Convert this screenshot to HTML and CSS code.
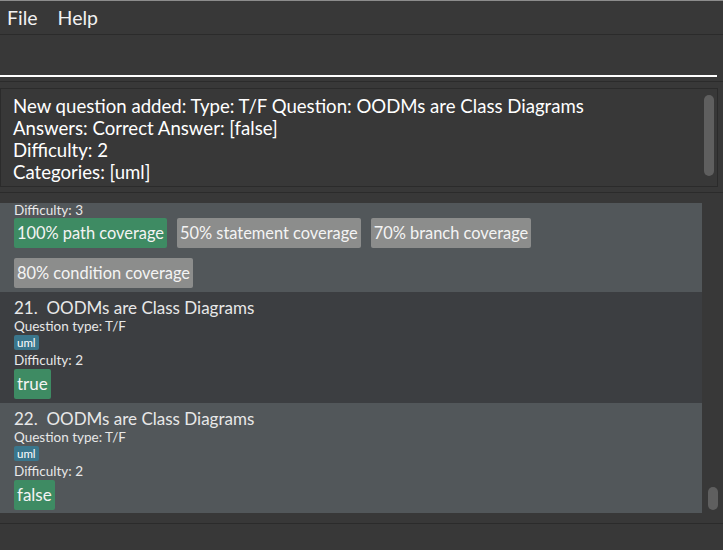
FILE: index.html
```html
<!DOCTYPE html>
<html>
<head>
<meta charset="utf-8">
<link rel="stylesheet" href="styles.css">
</head>
<body>
<div class="app">
  <div class="menubar">
    <span class="menu">File</span>
    <span class="menu">Help</span>
  </div>
  <div class="command">
    <div class="cmd-input"></div>
  </div>
  <div class="result-wrap">
    <div class="result">
      <div class="result-text">
        <div>New question added: Type: T/F Question: OODMs are Class Diagrams</div>
        <div>Answers: Correct Answer: [false]</div>
        <div>Difficulty: 2</div>
        <div>Categories: [uml]</div>
      </div>
      <div class="vscroll"><div class="thumb result-thumb"></div></div>
    </div>
  </div>
  <div class="list-wrap">
    <div class="list">
      <div class="card light first">
        <div class="small">Difficulty: 3</div>
        <div class="tags">
          <span class="tag green">100% path coverage</span>
          <span class="tag gray">50% statement coverage</span>
          <span class="tag gray">70% branch coverage</span>
          <span class="tag gray">80% condition coverage</span>
        </div>
      </div>
      <div class="card dark">
        <div class="title">21.&nbsp; OODMs are Class Diagrams</div>
        <div class="small">Question type: T/F</div>
        <span class="cat">uml</span>
        <div class="small">Difficulty: 2</div>
        <div class="tags"><span class="tag green big">true</span></div>
      </div>
      <div class="card light">
        <div class="title">22.&nbsp; OODMs are Class Diagrams</div>
        <div class="small">Question type: T/F</div>
        <span class="cat">uml</span>
        <div class="small">Difficulty: 2</div>
        <div class="tags"><span class="tag green big">false</span></div>
      </div>
    </div>
    <div class="list-scroll"><div class="thumb list-thumb"></div></div>
  </div>
  <div class="status"></div>
</div>
</body>
</html>
```
FILE: styles.css
```css
html, body {
  margin: 0;
  padding: 0;
  background: #383838;
  font-family: "Lato", "Open Sans", sans-serif;
  color: #ffffff;
}
.app {
  width: 723px;
  height: 550px;
  display: flex;
  flex-direction: column;
  border-top: 1px solid #8c8c8c;
  box-sizing: border-box;
  overflow: hidden;
}
.menubar {
  height: 33px;
  display: flex;
  align-items: center;
  gap: 20px;
  padding-left: 7px;
  border-bottom: 1px solid #2b2b2b;
  font-size: 19.5px;
  color: #f2f2f2;
}
.command {
  height: 47px;
  border-bottom: 1px solid #2b2b2b;
  display: flex;
  flex-direction: column;
  justify-content: flex-end;
  padding-bottom: 4px;
  box-sizing: border-box;
}
.cmd-input {
  width: 717px;
  height: 2px;
  background: #ffffff;
}
.result-wrap {
  padding: 6px 5px 5px 0;
  border-bottom: 1px solid #2b2b2b;
}
.result {
  height: 99px;
  border: 1px solid #2b2b2b;
  display: flex;
  box-sizing: border-box;
}
.result-text {
  flex: 1;
  padding: 6px 0 0 12px;
  font-size: 18.6px;
  line-height: 22px;
  color: #ffffff;
}
.vscroll {
  width: 16px;
  display: flex;
  justify-content: center;
  padding-top: 6px;
}
.thumb {
  width: 10px;
  background: #5f5f5f;
  border-radius: 5px;
}
.result-thumb {
  height: 81px;
}
.list-wrap {
  margin-top: 10px;
  height: 320px;
  display: flex;
  border-bottom: 1px solid #2b2b2b;
}
.list {
  width: 702px;
  display: flex;
  flex-direction: column;
}
.list-scroll {
  flex: 1;
  display: flex;
  flex-direction: column;
  justify-content: flex-end;
  align-items: center;
  padding-bottom: 13px;
}
.list-thumb {
  height: 23px;
}
.card {
  padding: 5px 14px 0;
  box-sizing: border-box;
}
.card.light { background: #52575a; }
.card.dark { background: #3c3e41; }
.card.first {
  height: 89px;
  padding-top: 0;
}
.card.dark {
  height: 111px;
}
.card:last-child {
  height: 110px;
}
.title {
  font-size: 17px;
  line-height: 22px;
  color: #e8e8e8;
}
.small {
  font-size: 13.5px;
  line-height: 15px;
  color: #e8e8e8;
}
.tags {
  display: flex;
  flex-wrap: wrap;
  column-gap: 10px;
  row-gap: 10px;
  margin-top: 1px;
}
.card.first .tags {
  margin-top: 0;
}
.tag {
  height: 30px;
  line-height: 30px;
  padding: 0 3px;
  font-size: 16.4px;
  border-radius: 2px;
  color: #f4f4f4;
}
.tag.big {
  font-size: 17px;
}
.tag.green { background: #3e8b63; }
.tag.gray { background: #8c8d8c; }
.cat {
  display: inline-block;
  align-self: flex-start;
  background: #3a768c;
  font-size: 11.5px;
  line-height: 15px;
  padding: 0 3px;
  border-radius: 2px;
  color: #ffffff;
  margin-top: 1px;
  vertical-align: top;
}
.status {
  flex: 1;
}
```
